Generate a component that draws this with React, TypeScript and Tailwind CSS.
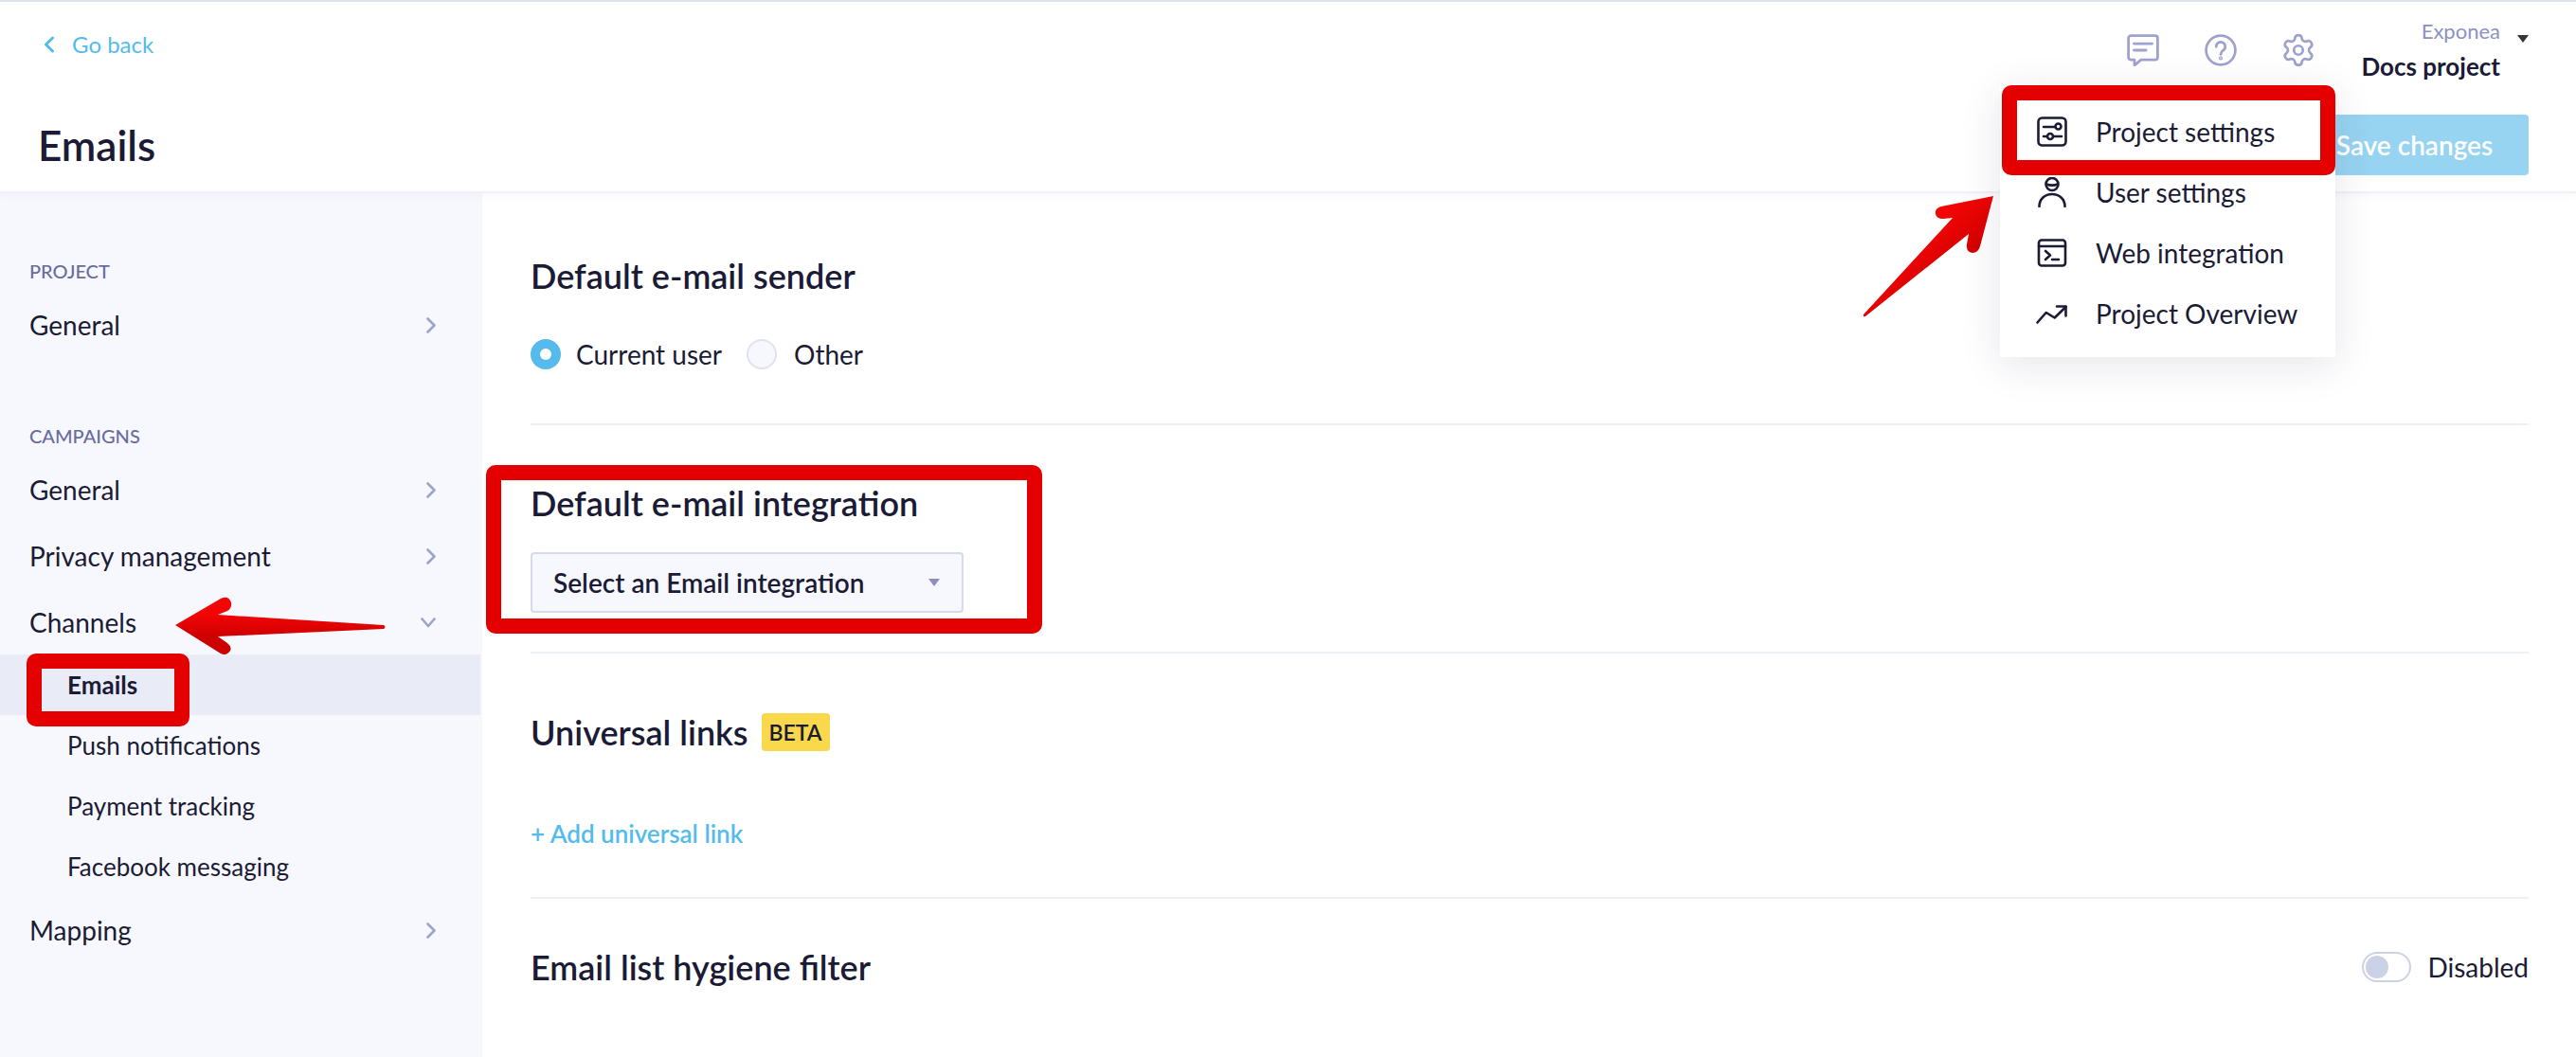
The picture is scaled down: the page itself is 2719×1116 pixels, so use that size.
import { Settings } from "lucide-react";

const ink = "text-[#1b1b36]";

const Chevron = ({ open = false }: { open?: boolean }) =>
  open ? (
    <svg width="16" height="11" viewBox="0 0 16 11" fill="none" stroke="#9ea2cc" strokeWidth="2.6" strokeLinecap="round" strokeLinejoin="round">
      <path d="M1.5 1.5 8 9l6.5-7.5" />
    </svg>
  ) : (
    <svg width="10" height="17" viewBox="0 0 10 17" fill="none" stroke="#9ea2cc" strokeWidth="2.6" strokeLinecap="round" strokeLinejoin="round">
      <path d="M1.5 1.5 8.5 8.5l-7 7" />
    </svg>
  );

const NavRow = ({ label, open = false }: { label: string; open?: boolean }) => (
  <div className="flex h-[70px] items-center justify-between pl-[31px] pr-[49px]">
    <span className={`text-[28px] ${ink}`}>{label}</span>
    <Chevron open={open} />
  </div>
);

const SubRow = ({ label, active = false }: { label: string; active?: boolean }) => (
  <div className={`flex h-16 items-center pl-[71px] text-[26px] ${ink} ${active ? "bg-[#e9ecf6] font-bold" : ""}`}>
    {label}
  </div>
);

const SectionLabel = ({ label }: { label: string }) => (
  <div className="flex h-8 items-center pl-[31px] text-[20px] font-medium text-[#686d9e]">{label}</div>
);

const Heading = ({ label }: { label: string }) => (
  <h2 className={`text-[36px] leading-10 font-semibold ${ink}`}>{label}</h2>
);

const Divider = () => <div className="h-0.5 bg-[#eef0f8]" />;

const SlidersIcon = () => (
  <svg width="32" height="32" viewBox="0 0 32 32" fill="none" stroke="#1b1b36" strokeWidth="2.6" strokeLinecap="round">
    <rect x="1.5" y="1.5" width="29" height="29" rx="4" />
    <path d="M7 11h12M7 21h4M18 21h8" />
    <circle cx="22.5" cy="10.5" r="3" />
    <circle cx="14" cy="21" r="3" />
  </svg>
);

const UserIcon = () => (
  <svg width="32" height="32" viewBox="0 0 32 32" fill="none" stroke="#1b1b36" strokeWidth="2.6" strokeLinecap="round">
    <circle cx="16" cy="7.5" r="6.5" />
    <path d="M10 7.5c4 1.5 8 1.5 12 0" />
    <path d="M2.5 31c0-8 6-13 13.500-13S29.500 23 29.500 31" />
  </svg>
);

const TerminalIcon = () => (
  <svg width="32" height="30" viewBox="0 0 32 30" fill="none" stroke="#1b1b36" strokeWidth="2.6" strokeLinecap="round" strokeLinejoin="round">
    <rect x="2" y="1.5" width="28" height="27" rx="3" />
    <path d="M2 8h28" />
    <path d="M9 13l5 4.500-5 4.500M16 22h7" />
  </svg>
);

const TrendIcon = () => (
  <svg width="33" height="24" viewBox="0 0 33 24" fill="none" stroke="#1b1b36" strokeWidth="2.6" strokeLinecap="round" strokeLinejoin="round">
    <path d="M1.500 21.500 10.700 11l9 5.500L31.500 5" />
    <path d="M22 4.500h9.500V14.500" />
  </svg>
);

const menuItems = [
  { label: "Project settings", icon: <SlidersIcon /> },
  { label: "User settings", icon: <UserIcon /> },
  { label: "Web integration", icon: <TerminalIcon /> },
  { label: "Project Overview", icon: <TrendIcon /> },
];

export default function App() {
  return (
    <div className="relative h-[1116px] w-[2719px] overflow-hidden bg-white font-['Lato',sans-serif]">
      {/* HEADER */}
      <header className="relative z-10 flex h-[204px] justify-between border-t-2 border-b-2 border-t-[#dfe1e8] border-b-[#f0f1f8] bg-white shadow-[0_2px_8px_rgba(60,60,120,0.04)]">
        <div className="pl-10">
          <div className="mt-[29px] flex h-8 items-center gap-[18px] pl-[6px]">
            <svg width="12" height="18" viewBox="0 0 12 18" fill="none" stroke="#55bbec" strokeWidth="3" strokeLinecap="round" strokeLinejoin="round">
              <path d="M9.500 2 2.500 9l7 7" />
            </svg>
            <span className="text-[24px] text-[#55bbec]">Go back</span>
          </div>
          <h1 className={`mt-[65px] text-[44px] leading-[50px] font-semibold ${ink}`}>Emails</h1>
        </div>
        <div className="flex flex-col items-end pr-[50px]">
          <div className="mt-4 flex h-[70px] items-center">
            <svg width="34" height="34" viewBox="0 0 32 32" fill="none" stroke="#9ea2cc" strokeWidth="2.6" strokeLinecap="round" strokeLinejoin="round">
              <path d="M4 1.500h24A2.500 2.500 0 0 1 30.500 4v19a2.500 2.500 0 0 1-2.500 2.500H14L7.500 31v-5.500H4A2.500 2.500 0 0 1 1.500 23V4A2.500 2.500 0 0 1 4 1.500Z" />
              <path d="M7 9.500h18M7 16h12" />
            </svg>
            <svg className="ml-[48px]" width="34" height="34" viewBox="0 0 32 32" fill="none" stroke="#9ea2cc" strokeWidth="2.6" strokeLinecap="round">
              <circle cx="16" cy="16" r="14.500" />
              <path d="M11.500 12.500a4.500 4.500 0 1 1 7 3.700c-1.800 1.200-2.500 2-2.500 3.800" />
              <circle cx="16" cy="24" r="0.600" />
            </svg>
            <Settings className="ml-[46px]" size={38} color="#9ea2cc" strokeWidth={1.7} />
            <div className="ml-[47px] flex flex-col items-end">
              <span className="text-[22px] leading-[30px] text-[#8c91c3]">Exponea</span>
              <span className={`mt-[4px] text-[26px] leading-9 font-bold ${ink}`}>Docs project</span>
            </div>
            <div className="mb-[24px] ml-[18px] h-0 w-0 border-x-[6px] border-t-[8px] border-x-transparent border-t-[#333338]" />
          </div>
          <button className="mt-[33px] flex h-16 w-[241px] items-center justify-center rounded-[4px] bg-[#97d4f1] text-[28px] font-semibold text-white">
            Save changes
          </button>
        </div>
      </header>

      <div className="flex h-[912px]">
        {/* SIDEBAR */}
        <aside className="w-[509px] shrink-0 bg-[#f7f8fd] pt-[66px]">
          <SectionLabel label="PROJECT" />
          <div className="mt-1.5">
            <NavRow label="General" />
          </div>
          <div className="mt-[66px]">
            <SectionLabel label="CAMPAIGNS" />
          </div>
          <div className="mt-1.5">
            <NavRow label="General" />
            <NavRow label="Privacy management" />
            <NavRow label="Channels" open />
          </div>
          <div className="-mt-px mr-0.5">
            <SubRow label="Emails" active />
            <SubRow label="Push notifications" />
            <SubRow label="Payment tracking" />
            <SubRow label="Facebook messaging" />
          </div>
          <NavRow label="Mapping" />
        </aside>

        {/* CONTENT */}
        <main className="flex-1 pr-[50px] pl-[51px]">
          <section className="pt-[67px] pb-[57px]">
            <Heading label="Default e-mail sender" />
            <div className={`mt-[47px] flex h-8 items-center text-[28px] ${ink}`}>
              <span className="flex h-8 w-8 items-center justify-center rounded-full bg-[#55bbec]">
                <span className="h-3 w-3 rounded-full bg-white" />
              </span>
              <span className="ml-4">Current user</span>
              <span className="ml-[26px] h-8 w-8 rounded-full border-2 border-[#dfe3f0] bg-[#f7f8fd]" />
              <span className="ml-[18px]">Other</span>
            </div>
          </section>
          <Divider />
          <section className="pt-[62px] pb-[41px]">
            <Heading label="Default e-mail integration" />
            <div className="mt-[32px] flex h-16 w-[457px] items-center justify-between rounded-[4px] border-2 border-[#d5dbea] bg-[#f7f8fd] pr-[23px] pl-[22px]">
              <span className={`text-[28px] font-semibold ${ink}`}>Select an Email integration</span>
              <span className="h-0 w-0 border-x-[6px] border-t-[8px] border-x-transparent border-t-[#8c8fb9]" />
            </div>
          </section>
          <Divider />
          <section className="pt-[63px] pb-[51px]">
            <div className="flex h-10 items-center gap-[14px]">
              <Heading label="Universal links" />
              <span className={`flex h-10 w-[72px] items-center justify-center rounded-[4px] bg-[#f9d84b] text-[23px] font-semibold ${ink}`}>BETA</span>
            </div>
            <div className="mt-[71px] flex h-8 items-center text-[26px] font-semibold text-[#55bbec]">+ Add universal link</div>
          </section>
          <Divider />
          <section className="flex items-center justify-between pt-[51px]">
            <Heading label="Email list hygiene filter" />
            <div className="flex items-center gap-[17px]">
              <span className="flex h-8 w-[52px] items-center rounded-full border-2 border-[#ccd2e6] pl-0.5">
                <span className="h-6 w-6 rounded-full bg-[#ccd2e6]" />
              </span>
              <span className={`text-[28px] ${ink}`}>Disabled</span>
            </div>
          </section>
        </main>
      </div>

      {/* DROPDOWN MENU */}
      <div className="absolute top-[90px] left-[2111px] z-20 h-[287px] w-[354px] bg-white pt-[17px] shadow-[0_8px_40px_rgba(40,40,90,0.12)]">
        {menuItems.map((item) => (
          <div key={item.label} className="flex h-16 items-center pl-[38px]">
            <span className="flex w-[33px] justify-center">{item.icon}</span>
            <span className={`ml-[30px] text-[28px] ${ink}`}>{item.label}</span>
          </div>
        ))}
      </div>

      {/* ANNOTATIONS */}
      <div className="absolute top-[690px] left-[28px] z-30 h-[77px] w-[172px] rounded-[10px] border-16 border-[#e50000]" />
      <div className="absolute top-[491px] left-[513px] z-30 h-[178px] w-[587px] rounded-[10px] border-16 border-[#e50000]" />
      <div className="absolute top-[90px] left-[2113px] z-30 h-[95px] w-[352px] rounded-[10px] border-16 border-[#e50000]" />
      <svg className="pointer-events-none absolute top-0 left-0 z-30" width="2719" height="1116" viewBox="0 0 2719 1116">
        <defs>
          <linearGradient id="arrowLeft" x1="0" y1="0" x2="0" y2="1">
            <stop offset="0.3" stopColor="#f20505" />
            <stop offset="0.7" stopColor="#cc0000" />
          </linearGradient>
          <linearGradient id="arrowUp" x1="0.55" y1="0.25" x2="0.8" y2="0.5">
            <stop offset="0" stopColor="#f20505" />
            <stop offset="1" stopColor="#d00000" />
          </linearGradient>
        </defs>
        <path
          fill="url(#arrowLeft)"
          d="M185 660 233 632Q241 628 244 636 245 642 240 645L230 649 405 660Q408 662 405 664L230 672 240 679Q245 683 243 687 239 693 233 690Z"
        />
        <path
          fill="url(#arrowUp)"
          d="M2104 207 2049 218Q2042 220 2043 226 2044 231 2051 231L2061 230 1967 332Q1966 335 1969 334L2078 247 2076 258Q2075 266 2082 267 2088 267 2090 260Z"
        />
      </svg>
    </div>
  );
}
